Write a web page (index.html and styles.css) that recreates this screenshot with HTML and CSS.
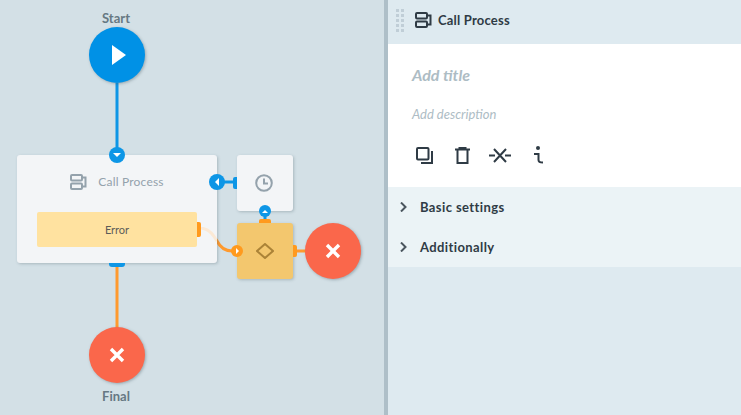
FILE: index.html
```html
<!DOCTYPE html>
<html lang="en">
<head>
<meta charset="UTF-8">
<title>Process editor</title>
<link rel="stylesheet" href="styles.css">
</head>
<body>
<div class="app">
	<!--diagram canvas, nodes sit at their own coordinates-->
	<div class="canvas">
		<svg class="wires" width="384" height="415" viewBox="0 0 384 415">
			<path d="M117 83V150" class="wire-blue"/>
			<path d="M117 267V330" class="wire-orange"/>
			<path d="M224 182H237" class="wire-blue"/>
			<path d="M265 214V221" class="wire-blue"/>
			<path d="M295 251H307" class="wire-orange"/>
			<path d="M201 228C210 229 214 236 217 241C220 247 225 251 232 251" class="wire-orange"/>
		</svg>

		<div class="label label-start">Start</div>
		<div class="event event-start">
			<svg width="16" height="20" viewBox="0 0 16 20"><path d="M1 0L15 10L1 20Z" fill="#fff"/></svg>
		</div>

		<div class="card card-process">
			<div class="card-title">
				<svg width="17" height="16" viewBox="0 0 17 16" class="ico-grey"><rect x="1" y="1" width="11" height="5.500" rx="1"/><rect x="1" y="9.500" width="11" height="5.500" rx="1"/><path d="M12 3.500H15.500V12.500H12"/></svg>
				<span>Call Process</span>
			</div>
			<div class="error-box">Error</div>
			<svg class="wire-fade" width="16" height="20" viewBox="0 0 16 20"><path d="M0 1C9 2 13 9 16 14"/></svg>
		</div>
		<div class="stub stub-error"></div>
		<div class="stub stub-bottom"></div>

		<div class="card card-timer">
			<svg width="18" height="18" viewBox="0 0 18 18" class="ico-grey"><circle cx="9" cy="9" r="7.800"/><path d="M9 4.500V9.500H13"/></svg>
		</div>
		<div class="stub stub-timer"></div>

		<div class="gateway">
			<svg width="18" height="16" viewBox="0 0 18 16" class="ico-gate"><path d="M9 1L17 8L9 15L1 8Z"/></svg>
		</div>
		<div class="stub stub-gate-top"></div>
		<div class="stub stub-gate-right"></div>

		<div class="port port-big port-top"><i class="tri tri-down"></i></div>
		<div class="port port-big port-left"><i class="tri tri-left"></i></div>
		<div class="port port-small port-up"><i class="tri tri-up"></i></div>
		<div class="port port-small port-in"><i class="tri tri-right"></i></div>

		<div class="event event-end event-side">
			<svg width="16" height="16" viewBox="0 0 16 16"><path d="M2 2L14 14M14 2L2 14" stroke="#fff" stroke-width="3.400"/></svg>
		</div>
		<div class="event event-end event-final">
			<svg width="16" height="16" viewBox="0 0 16 16"><path d="M2 2L14 14M14 2L2 14" stroke="#fff" stroke-width="3.400"/></svg>
		</div>
		<div class="label label-final">Final</div>
	</div>

	<div class="divider"></div>

	<div class="panel">
		<div class="panel-head">
			<div class="grip"><i></i><i></i><i></i><i></i><i></i><i></i><i></i><i></i><i></i><i></i></div>
			<svg width="17" height="16" viewBox="0 0 17 16" class="ico-dark"><rect x="1" y="1" width="11" height="5.500" rx="1"/><rect x="1" y="9.500" width="11" height="5.500" rx="1"/><path d="M12 3.500H15.500V12.500H12"/></svg>
			<span class="panel-title">Call Process</span>
		</div>
		<div class="panel-body">
			<div class="add-title">Add title</div>
			<div class="add-desc">Add description</div>
			<div class="actions">
				<svg width="17" height="17" viewBox="0 0 17 17" class="ico-dark"><rect x="1" y="1" width="11.500" height="11.500" rx="1"/><path d="M16 4V16H5"/></svg>
				<svg width="15" height="17" viewBox="0 0 15 17" class="ico-dark act-trash"><path d="M0 2.500H15M2.500 2.500V16H12.500V2.500M4.500 2.500V1H10.500V2.500"/></svg>
				<svg width="22" height="17" viewBox="0 0 22 17" class="ico-dark act-cross"><path d="M0 8.500H6M16 8.500H22M5 2L17 15M17 2L5 15"/></svg>
				<svg width="9" height="18" viewBox="0 0 9 18" class="ico-dark act-info"><circle cx="4" cy="2" r="2" class="dot"/><path d="M0 8H4.500V14C4.500 16 6 16.500 9 16.500"/></svg>
			</div>
		</div>
		<div class="section"><svg width="7" height="10" viewBox="0 0 7 10" class="ico-chev"><path d="M1 0.500L5.500 5L1 9.500"/></svg><span>Basic settings</span></div>
		<div class="section"><svg width="7" height="10" viewBox="0 0 7 10" class="ico-chev"><path d="M1 0.500L5.500 5L1 9.500"/></svg><span>Additionally</span></div>
	</div>
</div>
</body>
</html>
```

FILE: styles.css
```css
html, body {
	margin: 0;
	padding: 0;
	height: 100%;
	overflow: hidden;
}
body {
	font-family: "Lato", sans-serif;
	color: #2f3b45;
}
.app {
	display: flex;
	height: 415px;
}

/* canvas */
.canvas {
	position: relative;
	width: 384px;
	flex: none;
	background: #d3e0e6;
}
.wires {
	position: absolute;
	left: 0;
	top: 0;
}
.wires path {
	fill: none;
	stroke-width: 3;
}
.wire-blue {
	stroke: #0d96e6;
}
.wire-orange {
	stroke: #ff9a2e;
}
.label {
	position: absolute;
	left: 86px;
	width: 60px;
	text-align: center;
	font-size: 13px;
	font-weight: 700;
	color: #667883;
}
.label-start {
	top: 10px;
}
.label-final {
	top: 388px;
}
.event {
	position: absolute;
	width: 56px;
	height: 56px;
	border-radius: 50%;
	display: flex;
	align-items: center;
	justify-content: center;
	box-shadow: 1px 1px 3px rgba(70, 90, 100, 0.4);
}
.event-start {
	left: 89px;
	top: 27px;
	background: #0091e6;
}
.event-start svg {
	margin-left: 4px;
}
.event-end {
	background: #fa674b;
}
.event-side {
	left: 305px;
	top: 223px;
}
.event-final {
	left: 89px;
	top: 327px;
}
.card {
	position: absolute;
	background: #f3f5f7;
	border-radius: 3px;
	box-shadow: 1px 1px 3px rgba(70, 90, 100, 0.3);
}
.card-process {
	left: 17px;
	top: 155px;
	width: 200px;
	height: 108px;
}
.card-title {
	display: flex;
	align-items: center;
	justify-content: center;
	gap: 11px;
	height: 53px;
	font-size: 12px;
	letter-spacing: 0.2px;
	color: #94a2ac;
}
.error-box {
	position: absolute;
	left: 20px;
	top: 57px;
	width: 160px;
	height: 35px;
	line-height: 35px;
	text-align: center;
	font-size: 11px;
	color: #5c5c58;
	background: #ffe2a0;
	border-radius: 2px;
}
.wire-fade {
	position: absolute;
	left: 184px;
	top: 72px;
}
.wire-fade path {
	fill: none;
	stroke: #fbe9d5;
	stroke-width: 3;
}
.card-timer {
	left: 237px;
	top: 155px;
	width: 56px;
	height: 56px;
	display: flex;
	align-items: center;
	justify-content: center;
}
.card-timer svg {
	margin-left: -2px;
}
.ico-grey path, .ico-grey circle, .ico-grey rect {
	fill: none;
	stroke: #94a2ac;
	stroke-width: 2;
}
.gateway {
	position: absolute;
	left: 237px;
	top: 223px;
	width: 56px;
	height: 56px;
	display: flex;
	align-items: center;
	justify-content: center;
	background: #f3c76e;
	border-radius: 3px;
	box-shadow: 1px 1px 3px rgba(70, 90, 100, 0.3);
}
.ico-gate path {
	fill: none;
	stroke: #ab8337;
	stroke-width: 2;
}

/* connection stubs on node edges */
.stub {
	position: absolute;
}
.stub-error {
	left: 197px;
	top: 222px;
	width: 4px;
	height: 15px;
	background: #ff9a1e;
	border-radius: 0 2px 2px 0;
}
.stub-bottom {
	left: 109px;
	top: 263px;
	width: 16px;
	height: 4px;
	background: #0d96e6;
	border-radius: 0 0 3px 3px;
}
.stub-timer {
	left: 233px;
	top: 177px;
	width: 4px;
	height: 12px;
	background: #0d96e6;
	border-radius: 2px 0 0 2px;
}
.stub-gate-top {
	left: 259px;
	top: 219px;
	width: 12px;
	height: 4px;
	background: #ff9a1e;
	border-radius: 2px 2px 0 0;
}
.stub-gate-right {
	left: 293px;
	top: 245px;
	width: 4px;
	height: 12px;
	background: #ff9a1e;
	border-radius: 0 2px 2px 0;
}
.port {
	position: absolute;
	border-radius: 50%;
	display: flex;
	align-items: center;
	justify-content: center;
	background: #0d96e6;
}
.port-big {
	width: 16px;
	height: 16px;
}
.port-small {
	width: 12px;
	height: 12px;
}
.port-top {
	left: 109px;
	top: 147px;
}
.port-left {
	left: 209px;
	top: 174px;
}
.port-up {
	left: 259px;
	top: 205px;
}
.port-in {
	left: 231px;
	top: 245px;
	background: #ff9a1e;
}
.tri {
	width: 0;
	height: 0;
	border-style: solid;
	border-color: transparent;
}
.tri-down {
	border-width: 4px 4px 0 4px;
	border-top-color: #fff;
}
.tri-left {
	border-width: 4px 4px 4px 0;
	border-right-color: #fff;
}
.tri-up {
	border-width: 0 3px 3px 3px;
	border-bottom-color: #fff;
}
.tri-right {
	border-width: 3px 0 3px 3px;
	border-left-color: #fff;
}

.divider {
	width: 4px;
	flex: none;
	background: #aebfc8;
}

/* side panel */
.panel {
	flex: 1;
	background: #deeaf0;
}
.panel-head {
	display: flex;
	align-items: center;
	height: 40px;
	padding: 0 0 4px 8px;
}
.grip {
	display: grid;
	grid-template-columns: 3px 3px;
	gap: 2px;
	margin-right: 11px;
}
.grip i {
	width: 3px;
	height: 3px;
	background: #c0ced7;
}
.panel-title {
	margin-left: 6px;
	font-size: 13px;
	font-weight: 700;
	letter-spacing: 0.2px;
}
.ico-dark path, .ico-dark circle, .ico-dark rect {
	fill: none;
	stroke: #2f3b45;
	stroke-width: 2;
}
.ico-dark .dot {
	fill: #2f3b45;
	stroke: none;
}
.panel-body {
	height: 143px;
	box-sizing: border-box;
	padding: 21px 24px 0;
	background: #fff;
}
.add-title {
	font-size: 16px;
	font-style: italic;
	font-weight: 700;
	color: #adbcc4;
	height: 20px;
	line-height: 20px;
}
.add-desc {
	margin-top: 20px;
	font-size: 13px;
	font-style: italic;
	color: #adbcc4;
	height: 18px;
	line-height: 18px;
}
.actions {
	display: flex;
	align-items: center;
	margin-top: 23px;
	padding-left: 4px;
}
.act-trash {
	margin-left: 22px;
}
.act-cross {
	margin-left: 19px;
}
.act-info {
	margin-left: 23px;
}
.section {
	display: flex;
	align-items: center;
	height: 40px;
	padding-left: 12px;
	gap: 13px;
	background: #ebf3f6;
	font-size: 13px;
	font-weight: 700;
	letter-spacing: 0.4px;
}
.ico-chev path {
	fill: none;
	stroke: #4a555e;
	stroke-width: 2;
}
```
